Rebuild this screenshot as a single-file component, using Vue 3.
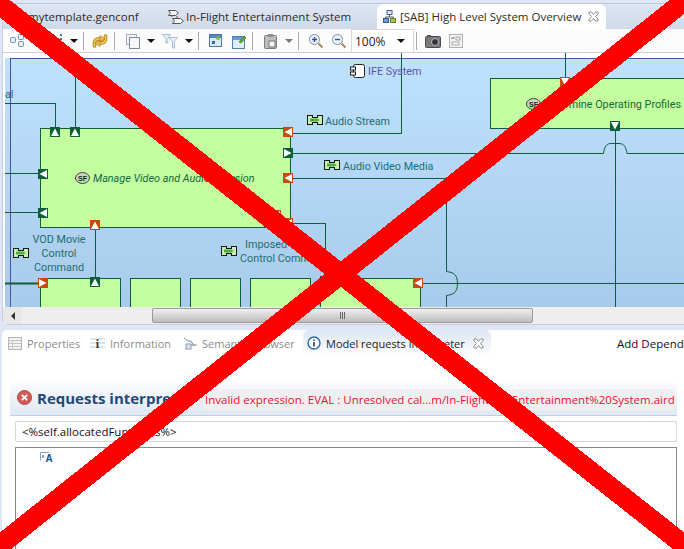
<script setup>
const ports = [
  { x: 50, y: 127, c: 'g', d: 'u' }, { x: 70, y: 127, c: 'g', d: 'u' },
  { x: 38, y: 169, c: 'g', d: 'l' }, { x: 38, y: 208, c: 'g', d: 'l' },
  { x: 283, y: 127, c: 'o', d: 'l' }, { x: 283, y: 148, c: 'g', d: 'r' },
  { x: 283, y: 173, c: 'o', d: 'l' }, { x: 271, y: 210, c: 'o', d: 'l' },
  { x: 283, y: 218, c: 'o', d: 'l' }, { x: 90, y: 220, c: 'o', d: 'u' },
  { x: 90, y: 277, c: 'g', d: 'u' }, { x: 38, y: 278, c: 'o', d: 'r' },
  { x: 320, y: 276, c: 'g', d: 'u' }, { x: 413, y: 278, c: 'o', d: 'l' },
  { x: 560, y: 77, c: 'o', d: 'd' }, { x: 610, y: 121, c: 'g', d: 'd' },
]
const arrows = { u: '1,9 5,1.5 9,9', d: '1,1 5,8.5 9,1', l: '9,1 1.5,5 9,9', r: '1,1 8.5,5 1,9' }
const boxes = [
  { x: 40, y: 278, w: 81, h: 40 }, { x: 130, y: 278, w: 51, h: 40 },
  { x: 190, y: 278, w: 51, h: 40 }, { x: 250, y: 278, w: 61, h: 40 },
  { x: 320, y: 278, w: 101, h: 40 },
]
const exchanges = [
  { x: 13, y: 248 }, { x: 221, y: 246 }, { x: 307, y: 115 }, { x: 324, y: 160 },
]
</script>

<template>
  <div class="page">
    <section class="editor">
      <div class="tabs">
        <div class="tab first">mytemplate.genconf</div>
        <div class="tab second">
          <svg width="16" height="16" viewBox="0 0 16 16"><path d="M4 8V5M8 8h2" stroke="#555" fill="none"/><path d="M.5 1.500h7l3 2.500-3 2.500h-7l2-2.500z" fill="#f6f6f6" stroke="#555"/><path d="M4.500 9.500h8l3 2.500-3 2.500h-8l2-2.500z" fill="#f6f6f6" stroke="#555"/></svg>
          In-Flight Entertainment System
        </div>
        <div class="tab active">
          <svg width="13" height="13" viewBox="0 0 13 13"><rect x="4" y="0.5" width="5" height="4" fill="#dfe8f6" stroke="#44608f"/><path d="M6.500 5v2M2.500 9V7h8v2" fill="none" stroke="#555"/><rect x="0.5" y="8.500" width="5" height="4" fill="#6f9bd0" stroke="#34608f"/><rect x="7.500" y="8.500" width="5" height="4" fill="#a6c44f" stroke="#66802c"/></svg>
          <span>[SAB] High Level System Overview</span>
          <svg class="close" width="11" height="11" viewBox="0 0 11 11"><path d="M1 1h2.500L5.500 3.500 7.500 1H10V3L7.500 5.500 10 8V10H7.500L5.500 7.500 3.500 10H1V8L3.500 5.500 1 3Z" fill="#fff" stroke="#8d8d8d"/></svg>
        </div>
      </div>

      <div class="toolbar">
        <svg class="ml7" width="14" height="13" viewBox="0 0 14 13"><rect x=".5" y="3.500" width="5" height="5" rx="1" fill="#e7eef8" stroke="#6d8cb8"/><rect x="8.500" y=".5" width="5" height="5" rx="1" fill="#e7eef8" stroke="#6d8cb8"/><rect x="8.500" y="7.500" width="5" height="5" rx="1" fill="#e7eef8" stroke="#6d8cb8"/></svg>
        <svg class="ml31" width="10" height="14" viewBox="0 0 10 14"><rect x="5" y="0" width="2" height="2" fill="#3f6fb0"/><rect x="5" y="4" width="2" height="2" fill="#3f6fb0"/><rect x="5" y="8" width="2" height="2" fill="#3f6fb0"/></svg>
        <span class="drop ml5"></span>
        <span class="sep ml5"></span>
        <svg class="ml8" width="16" height="16" viewBox="0 0 16 16"><g fill="none" stroke-linecap="round"><path d="M2.500 13V10Q2.500 6 7 6H9" stroke="#a87a18" stroke-width="3.600"/><path d="M13.500 3V6Q13.500 10 9 10H7" stroke="#a87a18" stroke-width="3.600"/><path d="M2.500 13V10Q2.500 6 7 6H9" stroke="#f2c24c" stroke-width="2"/><path d="M13.500 3V6Q13.500 10 9 10H7" stroke="#f2c24c" stroke-width="2"/></g><path d="M8 2.500L13 6 8 8.500zM8 7.500L3 10l5 3.500z" fill="#f2c24c" stroke="#a87a18" stroke-width=".7"/></svg>
        <span class="sep ml6"></span>
        <svg class="ml11" width="15" height="16" viewBox="0 0 15 16"><rect x=".5" y="1.500" width="10" height="10" fill="#eef1f6" stroke="#a5aebd"/><rect x="3.500" y="4.500" width="10" height="11" fill="#f4f6fa" stroke="#7e8ba0"/></svg>
        <span class="drop ml6"></span>
        <svg class="ml7" width="16" height="16" viewBox="0 0 16 16"><path d="M.5 1.500h8L5.800 5.500V10H3.800V5.500zM7 4.500h8.500L12.500 8.500V15H10.500V8.500z" fill="#e6eef8" stroke="#a3bad4" stroke-width=".9"/></svg>
        <span class="drop ml7"></span>
        <span class="sep ml5"></span>
        <svg class="ml10" width="13" height="13" viewBox="0 0 13 13"><rect x=".5" y=".5" width="12" height="12" fill="#dbeafa" stroke="#4f78a8"/><rect x="1" y="1" width="11" height="3" fill="#4f86c8"/><rect x="3" y="7" width="3" height="3" fill="#3a6aa8"/><circle cx="9" cy="4" r="2" fill="#7fb34a"/></svg>
        <svg class="ml10" width="15" height="16" viewBox="0 0 15 16"><rect x=".5" y="3.500" width="12" height="12" fill="#dfeefb" stroke="#5480b0"/><rect x="1" y="4" width="11" height="3" fill="#6a9bd4"/><path d="M7 9l5-6 2 2-5 5z" fill="#5da83a" stroke="#386f20" stroke-width=".6"/></svg>
        <span class="sep ml5"></span>
        <svg class="ml11" width="14" height="16" viewBox="0 0 14 16"><rect x=".5" y="2.500" width="12" height="13" rx="1" fill="#bdbdbd" stroke="#7b7b7b"/><rect x="4" y="1" width="5" height="3" fill="#8e8e8e"/><rect x="5" y="8" width="6" height="6" fill="#f3f3f3" stroke="#777"/></svg>
        <span class="drop grey ml7"></span>
        <span class="sep ml5"></span>
        <svg class="ml9" width="16" height="16" viewBox="0 0 16 16"><circle cx="6.500" cy="6.500" r="5" fill="#eef3fb" stroke="#7d8ca3"/><path d="M4 6.500h5M6.500 4v5" stroke="#2f55a4" stroke-width="1.400"/><path d="M10.500 10.500l4 4" stroke="#a58a5e" stroke-width="2"/></svg>
        <svg class="ml7" width="16" height="16" viewBox="0 0 16 16"><circle cx="6.500" cy="6.500" r="5" fill="#eef3fb" stroke="#7d8ca3"/><path d="M4 6.500h5" stroke="#2f55a4" stroke-width="1.400"/><path d="M10.500 10.500l4 4" stroke="#a58a5e" stroke-width="2"/></svg>
        <div class="combo ml4"><span>100%</span><span class="drop"></span></div>
        <span class="sep ml2"></span>
        <svg class="ml8" width="16" height="14" viewBox="0 0 16 14"><rect x=".5" y="2.500" width="15" height="11" rx="1" fill="#7a7a7a" stroke="#4a4a4a"/><rect x="2" y="1" width="4" height="2" fill="#555"/><circle cx="10" cy="8" r="3.500" fill="#30343a" stroke="#bbb"/></svg>
        <svg class="ml8" width="14" height="14" viewBox="0 0 14 14"><rect x=".5" y=".5" width="13" height="13" fill="#f4f4f4" stroke="#b0b0b0"/><rect x="2.500" y="3" width="3" height="2" fill="#a8a8a8"/><rect x="7" y="3" width="4" height="3" fill="none" stroke="#a8a8a8"/><rect x="3" y="8" width="7" height="3" fill="none" stroke="#a8a8a8"/></svg>
      </div>

      <div class="canvas">
        <div class="container"></div>

        <svg class="wires" width="679" height="254" viewBox="5 53 679 254">
          <g fill="none" stroke="#0c5f3a" stroke-width="1" shape-rendering="crispEdges">
            <path d="M5 103.500H55.500V127" />
            <path d="M75.500 58V127" />
            <path d="M565.500 53V77" />
            <path d="M293 133.500H401.500V53" />
            <path d="M5 173.500H38" />
            <path d="M5 212.500H38" />
            <path d="M95.500 230V277" />
            <path d="M293 223.500H325.500V276" />
            <path d="M423 283.500H684" />
            <path d="M615.500 131V307" />
          </g>
          <g fill="none" stroke="#0c5f3a" stroke-width="1">
            <path d="M293 153.500H603.500C604.500 147 606 143.500 611 143.500H619C624 143.500 626 147 627 153.500H684" />
            <path d="M293 178.500H446.500V271.500C453 272.500 457.500 274 457.500 283.500C457.500 293 453 294.500 446.500 295.500V307" />
          </g>
          <path d="M5 283.500H38" stroke="#0c5f3a" stroke-width="2" />
        </svg>

        <div class="fn main-fn">
          <svg class="sf" width="15" height="12" viewBox="0 0 15 12"><ellipse cx="7.500" cy="6" rx="7" ry="5.500" fill="#c9d6bd" stroke="#444"/><text x="7.500" y="8.500" text-anchor="middle">SF</text></svg>
          <em>Manage Video and Audio Diffusion</em>
        </div>
        <div class="fn side-fn">
          <svg class="sf" width="15" height="12" viewBox="0 0 15 12"><ellipse cx="7.500" cy="6" rx="7" ry="5.500" fill="#c9d6bd" stroke="#444"/><text x="7.500" y="8.500" text-anchor="middle">SF</text></svg>
          <span>Determine Operating Profiles</span>
        </div>

        <div v-for="(b, i) in boxes" :key="i" class="fn" :style="{ left: b.x - 5 + 'px', top: b.y - 58 + 'px', width: b.w + 'px', height: b.h + 'px' }"></div>

        <svg v-for="(p, i) in ports" :key="'p' + i" class="port" width="10" height="10" viewBox="0 0 10 10" :style="{ left: p.x - 5 + 'px', top: p.y - 58 + 'px' }">
          <rect width="10" height="10" :fill="p.c === 'g' ? '#0c5f3a' : '#c9480f'" />
          <polygon :points="arrows[p.d]" fill="#fff" />
        </svg>

        <svg v-for="(e, i) in exchanges" :key="'e' + i" class="port" width="16" height="10" viewBox="0 0 16 10" :style="{ left: e.x - 5 + 'px', top: e.y - 58 + 'px' }">
          <path d="M.5 .5H5.500V2.500H10.500V.5H15.500V9.500H10.500V7.500H5.500V9.500H.5Z" fill="#cfeeb4" stroke="#0d1f12" shape-rendering="crispEdges" />
          <path d="M3 3.500H10L13 5 10 6.500H3Z" fill="#4fae3a" />
        </svg>

        <svg class="port ife" width="15" height="14" viewBox="0 0 15 14"><rect x="3.500" y=".5" width="11" height="13" rx="2" fill="#fff" stroke="#222"/><rect x=".5" y="3" width="5" height="3" fill="#fff" stroke="#222"/><rect x=".5" y="8" width="5" height="3" fill="#fff" stroke="#222"/></svg>

        <span class="label blue" style="left:363px;top:7px">IFE System</span>
        <span class="label" style="left:0;top:30px">al</span>
        <span class="label" style="left:320px;top:57px">Audio Stream</span>
        <span class="label" style="left:338px;top:102px">Audio Video Media</span>
        <span class="label centered" style="left:19px;top:175px;width:70px">VOD Movie<br>Control<br>Command</span>
        <span class="label" style="left:235px;top:180px"><span class="indent">Imposed</span><br>Control Command</span>
      </div>

      <div class="hscroll">
        <span class="scroll-btn"><span class="arrow-l"></span></span>
        <div class="thumb"><span class="grip"></span></div>
      </div>
    </section>

    <section class="bottom">
      <div class="views">
        <div class="view v1">
          <svg width="14" height="13" viewBox="0 0 14 13"><rect x=".5" y=".5" width="13" height="12" fill="#f2f2f2" stroke="#b5b5b5"/><path d="M.5 3.500h13M.5 6.500h13M.5 9.500h13M4.500 3v10" stroke="#c6c6c6"/></svg>
          Properties
        </div>
        <div class="view v2">
          <svg width="15" height="13" viewBox="0 0 15 13"><path d="M0 2h15M0 6h15M0 10h15" stroke="#dbe5f0" stroke-width="2"/><text x="7.500" y="11" text-anchor="middle" class="info">i</text></svg>
          Information
        </div>
        <div class="view v3">
          <svg width="16" height="14" viewBox="0 0 16 14"><path d="M1 2l4 3 3 0M8 9h6M8 5l3 5" stroke="#7d8b9c" fill="none"/><rect x="3" y="8" width="5" height="5" fill="#dce6f0" stroke="#8a99ab"/></svg>
          Semantic Browser
        </div>
        <div class="view current">
          <svg width="14" height="14" viewBox="0 0 14 14"><circle cx="7" cy="7" r="6" fill="#fff" stroke="#2a6aa8" stroke-width="1.400"/><path d="M7 3.500v1.500M7 6v4.500" stroke="#17406e" stroke-width="1.600"/></svg>
          <span>Model requests interpreter</span>
          <svg class="close" width="11" height="11" viewBox="0 0 11 11"><path d="M1 1h2.500L5.500 3.500 7.500 1H10V3L7.500 5.500 10 8V10H7.500L5.500 7.500 3.500 10H1V8L3.500 5.500 1 3Z" fill="#fff" stroke="#8d8d8d"/></svg>
        </div>
        <span class="add-dep">Add Dependency</span>
      </div>

      <div class="form-head">
        <svg width="15" height="15" viewBox="0 0 15 15"><circle cx="7.500" cy="7.500" r="7" fill="#cf5a55" stroke="#b94540"/><path d="M4.800 4.800l5.400 5.400M10.200 4.800l-5.400 5.400" stroke="#fff" stroke-width="1.800"/></svg>
        <h1>Requests interpreter</h1>
        <p>Invalid expression. EVAL : Unresolved cal...m/In-Flight%20Entertainment%20System.aird</p>
      </div>

      <div class="query">&lt;%self.allocatedFunctions%&gt;</div>
      <div class="result">
        <svg width="14" height="11" viewBox="0 0 14 11"><path d="M.5 8.500V.5H9" fill="none" stroke="#7fa6d0"/><path d="M3 3v3" stroke="#204a80"/><text x="9" y="10" text-anchor="middle" class="a-mark">A</text></svg>
      </div>
    </section>

    <svg class="cross" width="684" height="549" viewBox="0 0 684 549">
      <path d="M-20 -10.800L704 560.800M-20 561L704 -14.600" stroke="#ff0000" stroke-width="20" fill="none" shape-rendering="crispEdges" />
    </svg>
  </div>
</template>

<style scoped>
.page {
  position: relative;
  width: 684px;
  height: 549px;
  overflow: hidden;
  background: #e0e6f6;
  font-family: "Open Sans", "Liberation Sans", sans-serif;
  font-size: 11.5px;
  color: #222;
}

.editor {
  margin: 3px 0 0 2px;
  width: 682px;
  height: 322px;
  border-top: 1px solid #bcc6dc;
  border-left: 1px solid #c6cfe2;
  border-bottom: 1px solid #c6cfe2;
  border-bottom-left-radius: 5px;
  background: #fff;
  display: flex;
  flex-direction: column;
  box-sizing: border-box;
}

.tabs {
  height: 25px;
  flex: none;
  display: flex;
  align-items: stretch;
  background: linear-gradient(#dfe6f3, #cfd9e8);
}

.tab {
  flex: none;
  display: flex;
  align-items: center;
  box-sizing: border-box;
  white-space: nowrap;
  color: #2b2b2b;
}

.first { width: 162px; padding-left: 25px; }
.second { width: 212px; padding-left: 3px; gap: 2px; }

.active {
  width: 229px;
  padding-left: 6px;
  gap: 4px;
  background: #fff;
  border-radius: 6px 6px 0 0;
}

.close { margin-left: 3px; flex: none; }

.toolbar {
  height: 24px;
  flex: none;
  display: flex;
  align-items: center;
  border-bottom: 1px solid #cfcfcf;
  box-sizing: border-box;
  background: #fcfcfc;
}

.toolbar svg { flex: none; }
.ml2 { margin-left: 2px; }
.ml4 { margin-left: 4px; }
.ml5 { margin-left: 5px; }
.ml6 { margin-left: 6px; }
.ml7 { margin-left: 7px; }
.ml8 { margin-left: 8px; }
.ml9 { margin-left: 9px; }
.ml10 { margin-left: 10px; }
.ml11 { margin-left: 11px; }
.ml31 { margin-left: 31px; }

.drop {
  flex: none;
  width: 0;
  height: 0;
  border-left: 4px solid transparent;
  border-right: 4px solid transparent;
  border-top: 4px solid #111;
}
.drop.grey { border-top-color: #777; }

.sep {
  flex: none;
  width: 1px;
  height: 18px;
  background: #aaa;
}

.combo {
  flex: none;
  width: 63px;
  height: 23px;
  padding: 0 8px 0 3px;
  box-sizing: border-box;
  display: flex;
  align-items: center;
  justify-content: space-between;
  background: #fff;
  border: 1px solid #d8d8d8;
  border-bottom: 0;
  font-size: 12px;
}

.canvas {
  position: relative;
  margin: 5px 0 0 2px;
  flex: 1;
  background: linear-gradient(#bee1fd, #a9cbeb);
  font-family: Roboto, "Liberation Sans", sans-serif;
  font-size: 10.8px;
}

.container {
  position: absolute;
  left: 5px;
  top: 0;
  right: 0;
  bottom: 0;
  border-left: 1px solid #4f4fa3;
  border-top: 1px solid #4f4fa3;
}

.wires { position: absolute; left: 0; top: -5px; }

.fn {
  position: absolute;
  box-sizing: border-box;
  background: #c3ff9f;
  border: 1px solid #0c5f3a;
  display: flex;
  align-items: center;
  color: #14683c;
  white-space: nowrap;
}

.main-fn {
  left: 35px;
  top: 70px;
  width: 251px;
  height: 100px;
  padding-left: 34px;
  gap: 3px;
}

.side-fn {
  left: 485px;
  top: 20px;
  width: 194px;
  height: 51px;
  padding-left: 35px;
  gap: 2px;
  border-right: 0;
}

.side-fn span { margin-top: 2px; }

.sf { flex: none; }
.sf text { font: bold 7px "Liberation Sans", sans-serif; fill: #222; }

.port { position: absolute; }
.ife { left: 345px; top: 6px; }

.label {
  position: absolute;
  color: #1b6f6e;
  line-height: 14px;
  white-space: nowrap;
}
.blue { color: #5656a8; }
.centered { text-align: center; }
.indent { margin-left: 5px; }

.hscroll {
  flex: none;
  height: 17px;
  display: flex;
  align-items: center;
  background: #eeeeee;
  position: relative;
}

.scroll-btn {
  flex: none;
  width: 19px;
  height: 100%;
  display: flex;
  align-items: center;
  justify-content: center;
  background: #e8e8e8;
}

.arrow-l {
  width: 0;
  height: 0;
  border-top: 4px solid transparent;
  border-bottom: 4px solid transparent;
  border-right: 4px solid #333;
}

.thumb {
  width: 381px;
  height: 15px;
  margin-left: 130px;
  box-sizing: border-box;
  border: 1px solid #9a9a9a;
  border-radius: 2px;
  background: linear-gradient(#f0f0f0, #bdbdbd);
  display: flex;
  align-items: center;
  justify-content: center;
}

.grip {
  width: 5px;
  height: 7px;
  background: repeating-linear-gradient(90deg, #666 0 1px, transparent 1px 2px);
}

.bottom {
  position: absolute;
  left: 2px;
  top: 330px;
  width: 682px;
  height: 219px;
  border-radius: 5px 0 0 0;
  background: #fff;
}

.views {
  height: 26px;
  padding-left: 6px;
  display: flex;
  align-items: center;
  white-space: nowrap;
  color: #8c8c8c;
  font-size: 11px;
}

.view {
  flex: none;
  display: flex;
  align-items: center;
  gap: 5px;
  height: 100%;
  box-sizing: border-box;
}

.v1 { width: 82px; }
.v2 { width: 93px; }
.v3 { width: 120px; gap: 3px; }

.current {
  width: 188px;
  padding-left: 4px;
  border-radius: 6px 6px 0 0;
  background: linear-gradient(#dde6f3, #fff);
  color: #1a1a1a;
}

.add-dep {
  position: absolute;
  left: 615px;
  top: 6px;
  color: #111;
  font-size: 11.5px;
}

.form-head {
  margin: 27px 7px 0 8px;
  height: 33px;
  padding: 0 0 3px 7px;
  display: flex;
  align-items: center;
  gap: 5px;
  position: relative;
  box-sizing: border-box;
  background: linear-gradient(#fafbfd, #dfe8f3);
  border-bottom: 1px solid #bcd0e4;
}

h1 {
  margin: 0;
  font-size: 15px;
  font-weight: 700;
  color: #1f4a78;
  white-space: nowrap;
}

p {
  position: absolute;
  left: 192px;
  top: 6px;
  width: 473px;
  height: 21px;
  margin: 0;
  padding-left: 3px;
  box-sizing: border-box;
  line-height: 21px;
  white-space: nowrap;
  overflow: hidden;
  background: #efeff2;
  color: #e8112d;
}

.query {
  margin: 5px 7px 0 13px;
  height: 21px;
  padding-left: 6px;
  box-sizing: border-box;
  line-height: 19px;
  border: 1px solid #d6d6d6;
  border-radius: 2px;
  color: #111;
}

.result {
  margin: 5px 7px 0 13px;
  height: 120px;
  padding: 3px 0 0 24px;
  box-sizing: border-box;
  border: 1px solid #888;
}

.info { font: bold 12px "Liberation Serif", serif; fill: #333; }
.a-mark { font: bold 10px "Liberation Sans", sans-serif; fill: #1c4f86; }

.cross { position: absolute; left: 0; top: 0; z-index: 5; pointer-events: none; }
</style>
